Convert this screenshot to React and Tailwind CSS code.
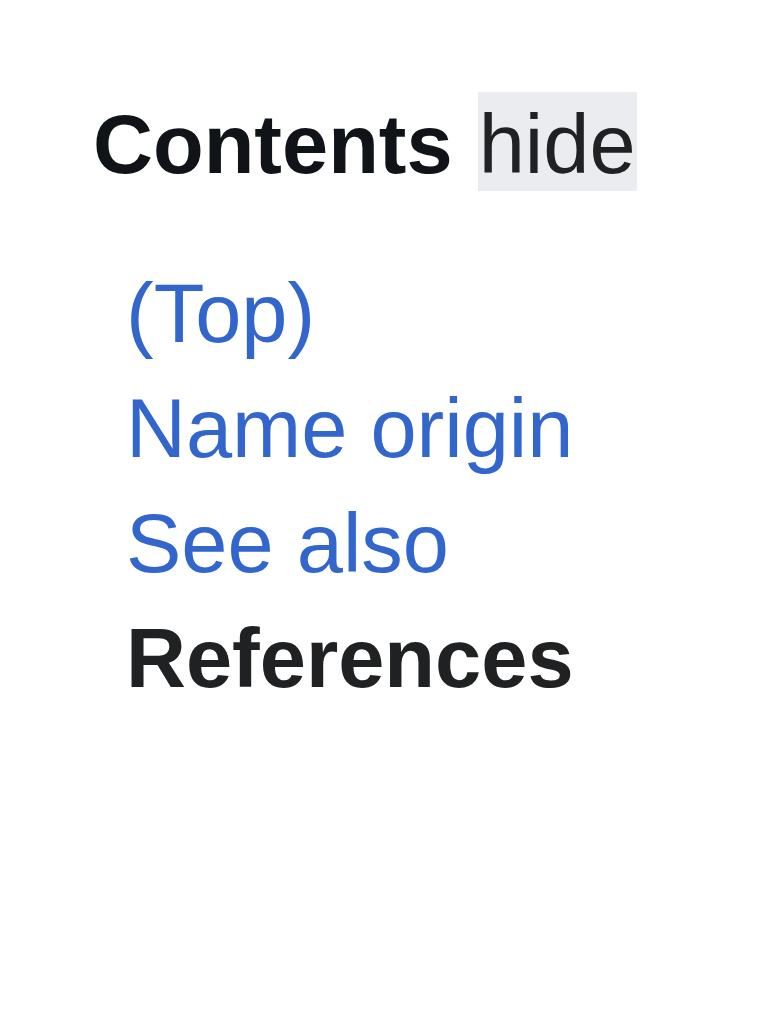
export default function App() {
  return (
    <div className="min-h-[1024px] bg-white pl-[93px] pt-[92px] font-['Liberation_Sans',Arial,sans-serif]">
      <div className="text-[83px] leading-[99px] whitespace-nowrap">
        <span className="font-bold text-[#101418]">Contents</span>{" "}
        <span className="inline-block ml-[2px] bg-[#eaecf0] text-[#202122] pt-[6px] leading-[93px] px-[1px]">hide</span>
      </div>
      <ul className="mt-[62px] ml-[33px] text-[83px] leading-[115px]">
        <li><a className="text-[#3366cc]">(Top)</a></li>
        <li><a className="text-[#3366cc]">Name origin</a></li>
        <li><a className="text-[#3366cc]">See also</a></li>
        <li className="font-bold text-[#202122]">References</li>
      </ul>
    </div>
  );
}
